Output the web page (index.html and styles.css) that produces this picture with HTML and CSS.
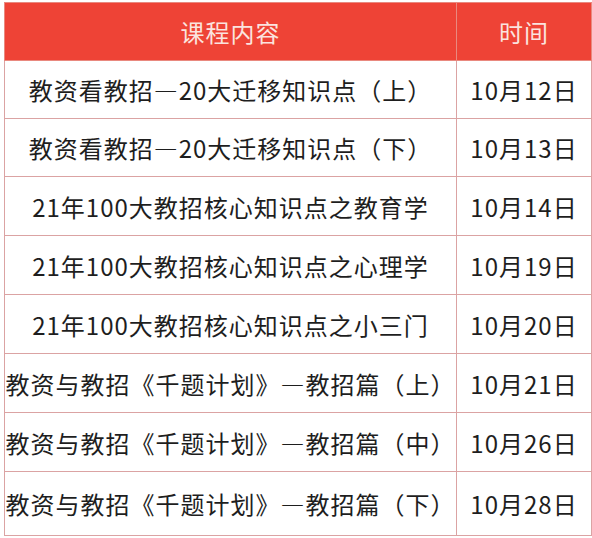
FILE: index.html
```html
<!DOCTYPE html>
<html lang="zh">
<head>
<meta charset="utf-8">
<link rel="stylesheet" href="styles.css">
</head>
<body>
<table class="schedule">
  <thead>
    <tr><th class="c-title">课程内容</th><th class="c-date">时间</th></tr>
  </thead>
  <tbody>
    <tr class="r1"><td>教资看教招—20大迁移知识点（上）</td><td>10月12日</td></tr>
    <tr class="r2"><td>教资看教招—20大迁移知识点（下）</td><td>10月13日</td></tr>
    <tr class="r3"><td>21年100大教招核心知识点之教育学</td><td>10月14日</td></tr>
    <tr class="r4"><td>21年100大教招核心知识点之心理学</td><td>10月19日</td></tr>
    <tr class="r5"><td>21年100大教招核心知识点之小三门</td><td>10月20日</td></tr>
    <tr class="r6"><td>教资与教招《千题计划》—教招篇（上）</td><td>10月21日</td></tr>
    <tr class="r7"><td>教资与教招《千题计划》—教招篇（中）</td><td>10月26日</td></tr>
    <tr class="r8"><td>教资与教招《千题计划》—教招篇（下）</td><td>10月28日</td></tr>
  </tbody>
</table>
</body>
</html>
```
FILE: styles.css
```css
html, body {
  margin: 0;
  padding: 0;
  background: #ffffff;
}
body {
  padding: 2px 0 0 4px;
  font-family: "Noto Sans CJK SC", "Noto Sans", sans-serif;
}
.schedule {
  border-collapse: collapse;
  width: 586px;
  table-layout: fixed;
}
.schedule th, .schedule td {
  border: 1px solid #dba3a3;
  padding: 0;
  text-align: center;
  font-size: 24px;
  letter-spacing: 1px;
  white-space: nowrap;
}
.schedule th {
  background: #ee4336;
  color: #fbe3df;
  font-weight: normal;
  height: 57px;
  border-color: #e9897f;
}
.c-title { width: 451px; }
.c-date { width: 134px; }
.schedule td {
  color: #1e1e1e;
  height: 57px;
}
.schedule tr.r3 td, .schedule tr.r4 td, .schedule tr.r5 td,
.schedule tr.r6 td, .schedule tr.r7 td {
  height: 58px;
}
.schedule tr.r8 td { height: 63px; }
```
